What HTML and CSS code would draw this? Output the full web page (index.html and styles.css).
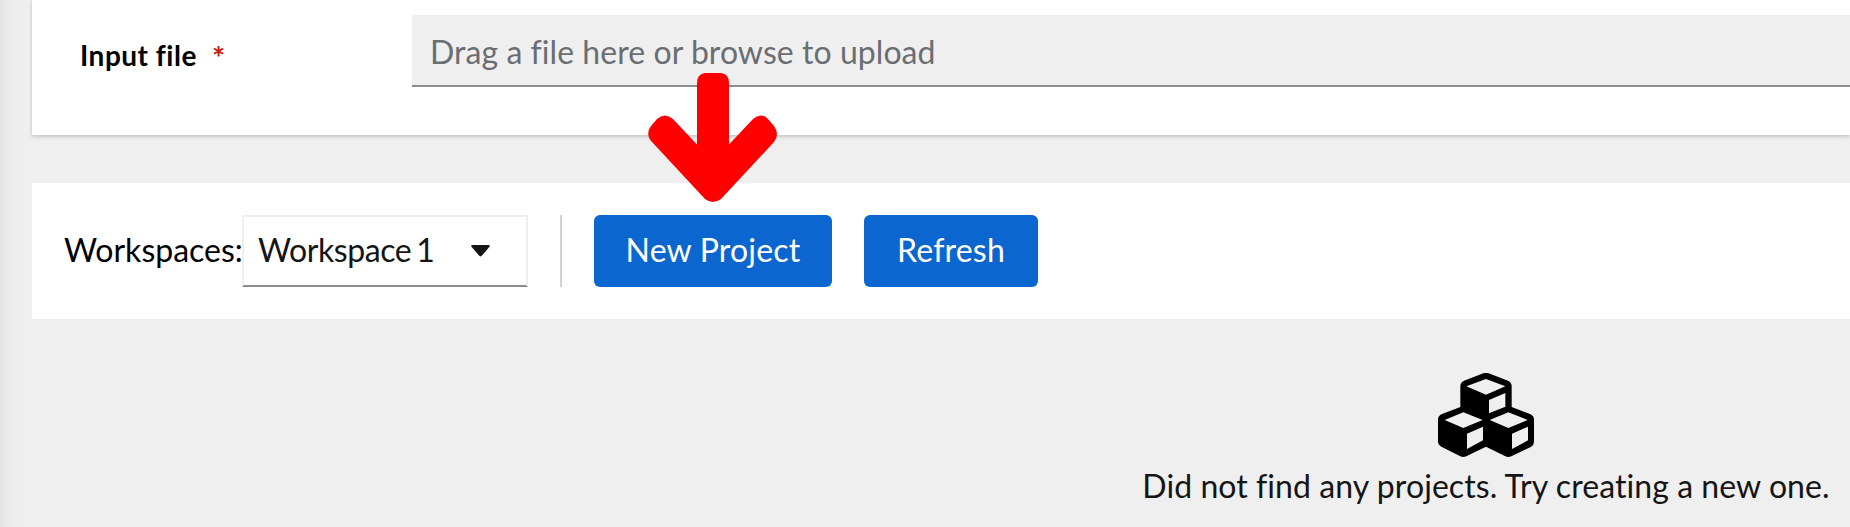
FILE: index.html
```html
<!DOCTYPE html>
<html lang="en">
<head>
<meta charset="utf-8">
<title>Projects</title>
<link rel="stylesheet" href="styles.css">
</head>
<body>
<main class="page">
  <section class="form-card">
    <label class="form-label"><span class="label-text">Input file</span><span class="required">*</span></label>
    <div class="file-input"><span class="placeholder">Drag a file here or browse to upload</span></div>
  </section>
  <section class="toolbar">
    <span class="workspace-label">Workspaces:</span>
    <div class="select">
      <span class="select-value">Workspace 1</span>
      <svg class="caret" viewBox="0 0 19 12"><path d="M1.4 0H17.6Q19.6.3 18.3 2L11 10.600Q9.500 12.200 8 10.600L.7 2Q-.6.3 1.400 0Z"/></svg>
    </div>
    <div class="divider"></div>
    <button class="button new-project"><span>New Project</span></button>
    <button class="button refresh"><span>Refresh</span></button>
  </section>
  <section class="empty">
    <svg class="cubes" viewBox="114 69 288 252">
      <path d="M250 70Q258 67 266 70L324 92Q335 97 335 109V171L390 192Q402 197 402 209V274Q402 286 392 291L334 319Q325 323 316 319L258 290L199 319Q190 323 181 319L124 290Q114 285 114 274V209Q114 197 126 192L181 171V109Q181 97 192 92Z"/>
      <path class="face" d="M258 87L316 109L258 134L199 109ZM267 150L316 129V170L267 190ZM190 187L248 210L190 234L134 210ZM201 251L249 230V271L201 297ZM325 187L383 210L325 234L269 210ZM336 251L384 230V271L336 297Z"/>
    </svg>
    <p class="empty-text">Did not find any projects. Try creating a new one.</p>
  </section>
</main>
<svg class="arrow" viewBox="0 0 130 130"><path d="M57 0H73Q81 1 81 10V71.500L105 46Q113 39 120 46L126 53Q132 61 126 69L73 126Q65 132 57 126L4 69Q-3 61 3 53L9 46Q17 39 25 46L49 71.500V10Q49 1 57 0Z"/></svg>
</body>
</html>
```
FILE: styles.css
```css
* { box-sizing: border-box; }
body {
  margin: 0;
  height: 527px;
  overflow: hidden;
  position: relative;
  background: linear-gradient(90deg, #e4e4e4 0, #ebebeb 8px, #efefef 20px) #efefef;
  font-family: Lato, "Open Sans", sans-serif;
  font-size: 32px;
  line-height: 48px;
  font-variant-ligatures: none;
  color: #151515;
}
.page { padding-left: 32px; }
.form-card {
  display: flex;
  height: 135px;
  padding: 15px 0 0 48px;
  background: #fff;
  box-shadow: 0 2px 4px rgba(3, 3, 3, .14), 0 0 4px rgba(3, 3, 3, .08);
}
.form-label {
  display: flex;
  width: 332px;
  padding-top: 16px;
  gap: 15px;
  font-size: 28px;
  color: #000;
}
.label-text { font-weight: 700; letter-spacing: .5px; }
.required { padding-top: 2px; color: #c9190b; font-size: 31px; font-weight: 700; }
.file-input {
  flex: 1;
  height: 72px;
  padding: 13px 18px;
  background: #efefef;
  border-bottom: 2px solid #8a8d90;
}
.placeholder { color: #6a6e73; letter-spacing: .05px; }
.toolbar {
  display: flex;
  height: 136px;
  margin-top: 48px;
  padding: 32px;
  background: #fff;
}
.workspace-label { width: 178px; line-height: 70px; white-space: nowrap; color: #000; }
.select {
  display: flex;
  align-items: center;
  width: 286px;
  height: 72px;
  padding: 0 36px 0 14px;
  justify-content: space-between;
  border: 2px solid #efefef;
  border-bottom-color: #8a8d90;
}
.select-value { padding-bottom: 2px; letter-spacing: -.4px; word-spacing: -3px; }
.caret { width: 19px; height: 12px; fill: #151515; }
.divider { width: 2px; margin: 0 32px; background: #d2d2d2; }
.button {
  height: 72px;
  margin: 0 32px 0 0;
  padding: 0 0 2px;
  border: 0;
  border-radius: 6px;
  background: #0c66d0;
  color: #fff;
  font: inherit;
  letter-spacing: .2px;
}
.new-project { width: 238px; }
.refresh { width: 174px; }
.empty {
  display: flex;
  flex-direction: column;
  align-items: center;
  padding: 54px 0 0 1090px;
}
.cubes { width: 96px; height: 84px; }
.face { fill: #efefef; }
.empty-text { margin: 5px 0 0; white-space: nowrap; letter-spacing: .07px; }
.arrow {
  position: absolute;
  left: 647.5px;
  top: 73px;
  width: 130px;
  height: 130px;
  fill: #f00;
}
```
